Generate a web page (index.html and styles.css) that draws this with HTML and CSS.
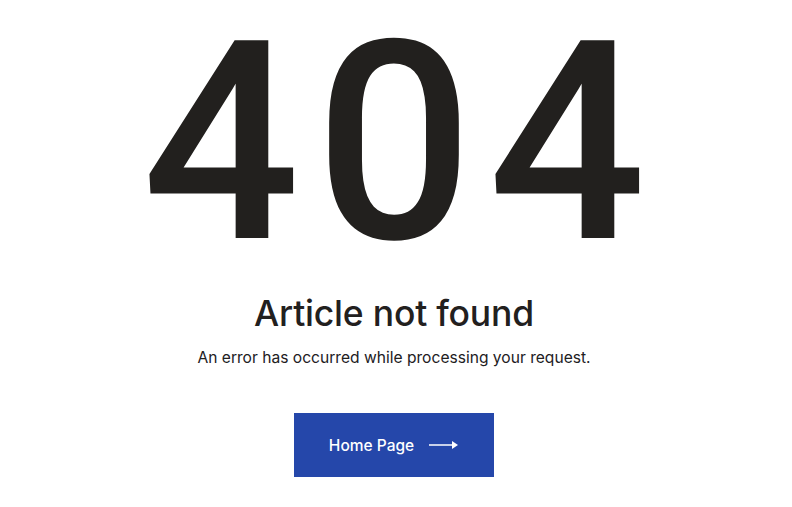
FILE: index.html
```html
<!DOCTYPE html>
<html>
  <head>
    <title>Article not found</title>
    <link rel="stylesheet" href="styles.css">
  </head>
  <body>
    <main class="error-page">
      <div class="code">404</div>
      <h1 class="title">Article not found</h1>
      <p class="message">An error has occurred while processing your request.</p>
      <a href="#" class="home-btn">
        <span>Home Page</span>
        <svg class="arrow" width="30" height="10" viewBox="0 0 30 10">
          <line x1="0" y1="5" x2="24" y2="5" stroke="#fff" stroke-width="1.5" />
          <path d="M23 1 L29 5 L23 9 Z" fill="#fff" />
        </svg>
      </a>
    </main>
  </body>
</html>
```

FILE: styles.css
```css
body {
  margin: 0;
  background: #fff;
  font-family: Inter, "Noto Sans", sans-serif;
  color: #22201e;
}
.error-page {
  display: flex;
  flex-direction: column;
  align-items: center;
  padding: 4px 4px 0 0;
}
.code {
  font-family: Roboto, sans-serif;
  font-weight: 500;
  font-size: 278px;
  line-height: 1;
  letter-spacing: 15px;
  margin-right: -15px;
  color: #22201e;
}
.title {
  margin: 10px 0 0;
  font-size: 35.5px;
  font-weight: 500;
  line-height: 44px;
  letter-spacing: -0.2px;
}
.message {
  margin: 10px 0 0;
  font-size: 15.6px;
  line-height: 24px;
}
.home-btn {
  display: flex;
  align-items: center;
  justify-content: center;
  gap: 15px;
  width: 200px;
  height: 64px;
  margin-top: 43px;
  background: #2547aa;
  color: #fff;
  font-size: 15.5px;
  font-weight: 500;
  text-decoration: none;
}
.arrow {
  display: block;
}
```
